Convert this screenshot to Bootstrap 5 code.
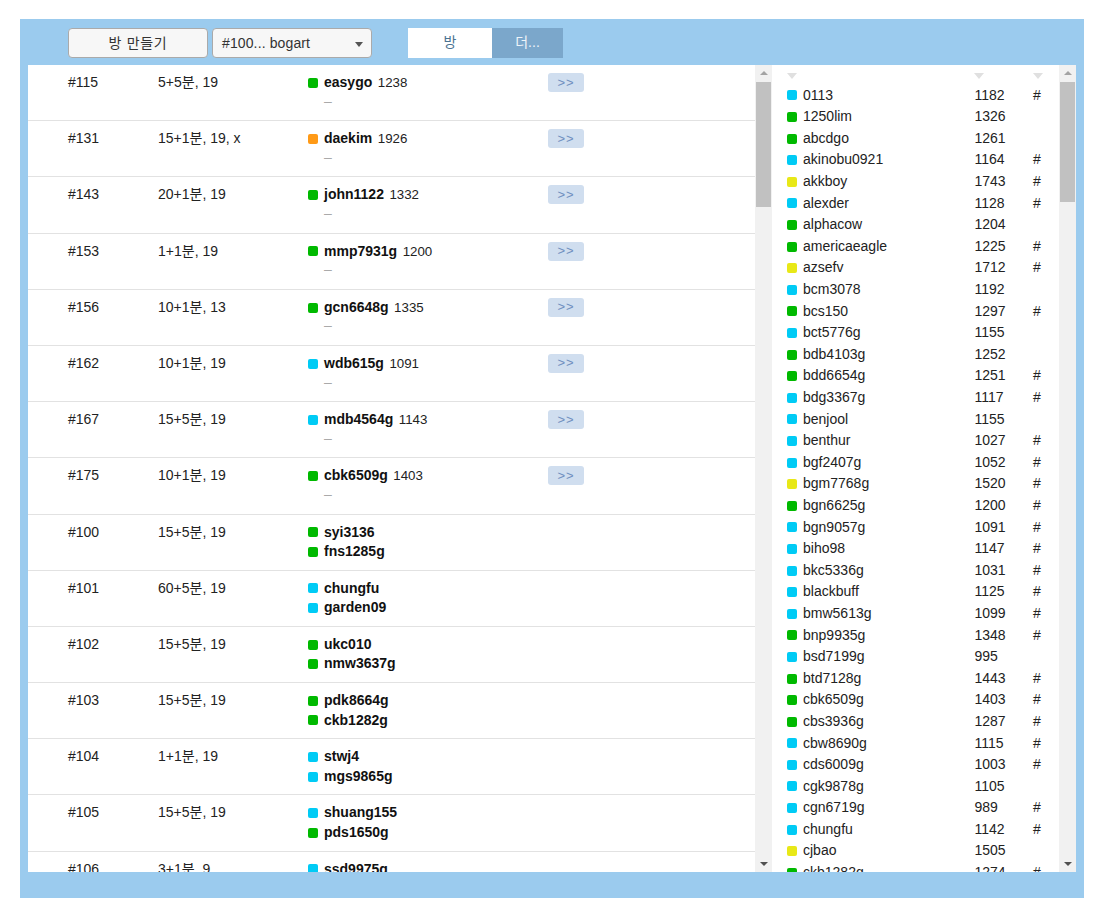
<!DOCTYPE html>
<html lang="ko"><head><meta charset="utf-8"><title>Rooms</title>
<link rel="stylesheet" href="https://cdn.jsdelivr.net/npm/bootstrap@5.3.0/dist/css/bootstrap.min.css">
<style>
html,body{height:898px;overflow:hidden;background:#fff}
body{font:14px/19.6px "Liberation Sans","Noto Sans CJK KR",sans-serif;color:#222}
.frame{margin:19px 26px 0 20px;height:879px;background:#9bcbee;padding:0 8px 26px}
.topbar{height:46px;padding:9px 0 0 40px}
.mk{width:140px;height:30px;padding:0;background:#f7f7f7;border:1px solid #aaa;border-radius:4px;font-size:14px;letter-spacing:.7px;color:#333}
.pick{width:160px;height:30px;margin-left:4px;padding:0 8px 0 9px;background:#f7f7f7;border:1px solid #aaa;border-radius:4px;font-size:14px;letter-spacing:.12px;color:#333}
.pick::after{border-top:5px solid #555;border-left:4px solid transparent;border-right:4px solid transparent;border-bottom:0;margin:2px 0 0}
.tabz{margin-left:36px;height:30px}
.tabz .nav-link{height:30px;padding:0;line-height:28px;font-size:14px;text-align:center;border-radius:0}
.tab-on{width:84px;background:#fff;color:#4a7391}
.tab-off{width:71px;background:#7ba7cb;color:#eef4f9}
.body-wrap{height:807px;background:#fff;overflow:hidden}
.left-pane{width:727px;height:807px;overflow:hidden}
.gm{height:56.2px;padding:8px 0 0 40px;border-bottom:1px solid #e2e2e2}
.c-id{width:90px}.c-tm{width:150px}.c-pl{width:240px}
.sq{display:inline-block;width:10px;height:10px;border-radius:2px;margin-right:6px;flex:none}
.g{background:#00b900}.b{background:#00cbf5}.y{background:#e8e817}.o{background:#ff9a17}
.pl{display:flex;align-items:center;height:19.6px}
.pl b{font-weight:700;color:#111}
.pl span.rt{margin-left:5.5px;font-size:13.3px}
.dash{padding-left:16px;color:#aaa;height:19.6px;line-height:16px;font-size:14px}
.go{width:36px;height:19px;margin-top:0;padding:0;background:#d0deef;border:0;border-radius:3px;font-size:13px;line-height:18px;color:#6f8fc0;letter-spacing:1px}
.sbar{width:17px;height:807px;background:#f1f1f1;position:relative;flex:none}
.thumb{background:#c1c1c1;margin:17px 0 0 1px;width:15px}
.t1{height:125px}.t2{height:120px}
.up,.dn{position:absolute;left:5px;width:0;height:0;border-left:4px solid transparent;border-right:4px solid transparent}
.up{top:6px;border-bottom:4px solid #a3a3a3}.dn{bottom:6px;border-top:4px solid #505050}
.right-pane{width:287px;height:807px;overflow:hidden;flex:none}
.heads{height:19.7px;padding:8px 0 0 15px;display:flex}
.tri{width:0;height:0;border-left:5px solid transparent;border-right:5px solid transparent;border-top:6px solid #e0e0e0}
.tri.a{margin-right:177px}.tri.c{margin-left:49px}
.ur{height:21.6px;line-height:21.6px;padding-left:15px;display:flex;align-items:center}
.u-n{width:171.5px}.u-r{width:58.5px}
</style></head><body>
<div class="frame">
<div class="topbar d-flex">
<button type="button" class="btn mk">방 만들기</button>
<button type="button" class="btn pick dropdown-toggle d-flex align-items-center justify-content-between">#100... bogart</button>
<nav class="nav tabz"><a class="nav-link tab-on" href="#">방</a><a class="nav-link tab-off" href="#">더...</a></nav>
</div>
<div class="body-wrap d-flex">
<div class="left-pane">
<div class="gm d-flex"><div class="c-id">#115</div><div class="c-tm">5+5분, 19</div><div class="c-pl"><div class="pl"><i class="sq g"></i><b>easygo</b><span class="rt">1238</span></div><div class="dash">–</div></div><button type="button" class="btn go">&gt;&gt;</button></div>
<div class="gm d-flex"><div class="c-id">#131</div><div class="c-tm">15+1분, 19, x</div><div class="c-pl"><div class="pl"><i class="sq o"></i><b>daekim</b><span class="rt">1926</span></div><div class="dash">–</div></div><button type="button" class="btn go">&gt;&gt;</button></div>
<div class="gm d-flex"><div class="c-id">#143</div><div class="c-tm">20+1분, 19</div><div class="c-pl"><div class="pl"><i class="sq g"></i><b>john1122</b><span class="rt">1332</span></div><div class="dash">–</div></div><button type="button" class="btn go">&gt;&gt;</button></div>
<div class="gm d-flex"><div class="c-id">#153</div><div class="c-tm">1+1분, 19</div><div class="c-pl"><div class="pl"><i class="sq g"></i><b>mmp7931g</b><span class="rt">1200</span></div><div class="dash">–</div></div><button type="button" class="btn go">&gt;&gt;</button></div>
<div class="gm d-flex"><div class="c-id">#156</div><div class="c-tm">10+1분, 13</div><div class="c-pl"><div class="pl"><i class="sq g"></i><b>gcn6648g</b><span class="rt">1335</span></div><div class="dash">–</div></div><button type="button" class="btn go">&gt;&gt;</button></div>
<div class="gm d-flex"><div class="c-id">#162</div><div class="c-tm">10+1분, 19</div><div class="c-pl"><div class="pl"><i class="sq b"></i><b>wdb615g</b><span class="rt">1091</span></div><div class="dash">–</div></div><button type="button" class="btn go">&gt;&gt;</button></div>
<div class="gm d-flex"><div class="c-id">#167</div><div class="c-tm">15+5분, 19</div><div class="c-pl"><div class="pl"><i class="sq b"></i><b>mdb4564g</b><span class="rt">1143</span></div><div class="dash">–</div></div><button type="button" class="btn go">&gt;&gt;</button></div>
<div class="gm d-flex"><div class="c-id">#175</div><div class="c-tm">10+1분, 19</div><div class="c-pl"><div class="pl"><i class="sq g"></i><b>cbk6509g</b><span class="rt">1403</span></div><div class="dash">–</div></div><button type="button" class="btn go">&gt;&gt;</button></div>
<div class="gm d-flex"><div class="c-id">#100</div><div class="c-tm">15+5분, 19</div><div class="c-pl"><div class="pl"><i class="sq g"></i><b>syi3136</b></div><div class="pl"><i class="sq g"></i><b>fns1285g</b></div></div></div>
<div class="gm d-flex"><div class="c-id">#101</div><div class="c-tm">60+5분, 19</div><div class="c-pl"><div class="pl"><i class="sq b"></i><b>chungfu</b></div><div class="pl"><i class="sq b"></i><b>garden09</b></div></div></div>
<div class="gm d-flex"><div class="c-id">#102</div><div class="c-tm">15+5분, 19</div><div class="c-pl"><div class="pl"><i class="sq g"></i><b>ukc010</b></div><div class="pl"><i class="sq g"></i><b>nmw3637g</b></div></div></div>
<div class="gm d-flex"><div class="c-id">#103</div><div class="c-tm">15+5분, 19</div><div class="c-pl"><div class="pl"><i class="sq g"></i><b>pdk8664g</b></div><div class="pl"><i class="sq g"></i><b>ckb1282g</b></div></div></div>
<div class="gm d-flex"><div class="c-id">#104</div><div class="c-tm">1+1분, 19</div><div class="c-pl"><div class="pl"><i class="sq b"></i><b>stwj4</b></div><div class="pl"><i class="sq b"></i><b>mgs9865g</b></div></div></div>
<div class="gm d-flex"><div class="c-id">#105</div><div class="c-tm">15+5분, 19</div><div class="c-pl"><div class="pl"><i class="sq b"></i><b>shuang155</b></div><div class="pl"><i class="sq g"></i><b>pds1650g</b></div></div></div>
<div class="gm d-flex"><div class="c-id">#106</div><div class="c-tm">3+1분, 9</div><div class="c-pl"><div class="pl"><i class="sq b"></i><b>ssd9975g</b></div></div></div>
</div>
<div class="sbar"><i class="up"></i><div class="thumb t1"></div><i class="dn"></i></div>
<div class="right-pane">
<div class="heads"><i class="tri a"></i><i class="tri"></i><i class="tri c"></i></div>
<div class="ur"><i class="sq b"></i><div class="u-n">0113</div><div class="u-r">1182</div><div>#</div></div>
<div class="ur"><i class="sq g"></i><div class="u-n">1250lim</div><div class="u-r">1326</div></div>
<div class="ur"><i class="sq g"></i><div class="u-n">abcdgo</div><div class="u-r">1261</div></div>
<div class="ur"><i class="sq b"></i><div class="u-n">akinobu0921</div><div class="u-r">1164</div><div>#</div></div>
<div class="ur"><i class="sq y"></i><div class="u-n">akkboy</div><div class="u-r">1743</div><div>#</div></div>
<div class="ur"><i class="sq b"></i><div class="u-n">alexder</div><div class="u-r">1128</div><div>#</div></div>
<div class="ur"><i class="sq g"></i><div class="u-n">alphacow</div><div class="u-r">1204</div></div>
<div class="ur"><i class="sq g"></i><div class="u-n">americaeagle</div><div class="u-r">1225</div><div>#</div></div>
<div class="ur"><i class="sq y"></i><div class="u-n">azsefv</div><div class="u-r">1712</div><div>#</div></div>
<div class="ur"><i class="sq b"></i><div class="u-n">bcm3078</div><div class="u-r">1192</div></div>
<div class="ur"><i class="sq g"></i><div class="u-n">bcs150</div><div class="u-r">1297</div><div>#</div></div>
<div class="ur"><i class="sq b"></i><div class="u-n">bct5776g</div><div class="u-r">1155</div></div>
<div class="ur"><i class="sq g"></i><div class="u-n">bdb4103g</div><div class="u-r">1252</div></div>
<div class="ur"><i class="sq g"></i><div class="u-n">bdd6654g</div><div class="u-r">1251</div><div>#</div></div>
<div class="ur"><i class="sq b"></i><div class="u-n">bdg3367g</div><div class="u-r">1117</div><div>#</div></div>
<div class="ur"><i class="sq b"></i><div class="u-n">benjool</div><div class="u-r">1155</div></div>
<div class="ur"><i class="sq b"></i><div class="u-n">benthur</div><div class="u-r">1027</div><div>#</div></div>
<div class="ur"><i class="sq b"></i><div class="u-n">bgf2407g</div><div class="u-r">1052</div><div>#</div></div>
<div class="ur"><i class="sq y"></i><div class="u-n">bgm7768g</div><div class="u-r">1520</div><div>#</div></div>
<div class="ur"><i class="sq g"></i><div class="u-n">bgn6625g</div><div class="u-r">1200</div><div>#</div></div>
<div class="ur"><i class="sq b"></i><div class="u-n">bgn9057g</div><div class="u-r">1091</div><div>#</div></div>
<div class="ur"><i class="sq b"></i><div class="u-n">biho98</div><div class="u-r">1147</div><div>#</div></div>
<div class="ur"><i class="sq b"></i><div class="u-n">bkc5336g</div><div class="u-r">1031</div><div>#</div></div>
<div class="ur"><i class="sq b"></i><div class="u-n">blackbuff</div><div class="u-r">1125</div><div>#</div></div>
<div class="ur"><i class="sq b"></i><div class="u-n">bmw5613g</div><div class="u-r">1099</div><div>#</div></div>
<div class="ur"><i class="sq g"></i><div class="u-n">bnp9935g</div><div class="u-r">1348</div><div>#</div></div>
<div class="ur"><i class="sq b"></i><div class="u-n">bsd7199g</div><div class="u-r">995</div></div>
<div class="ur"><i class="sq g"></i><div class="u-n">btd7128g</div><div class="u-r">1443</div><div>#</div></div>
<div class="ur"><i class="sq g"></i><div class="u-n">cbk6509g</div><div class="u-r">1403</div><div>#</div></div>
<div class="ur"><i class="sq g"></i><div class="u-n">cbs3936g</div><div class="u-r">1287</div><div>#</div></div>
<div class="ur"><i class="sq b"></i><div class="u-n">cbw8690g</div><div class="u-r">1115</div><div>#</div></div>
<div class="ur"><i class="sq b"></i><div class="u-n">cds6009g</div><div class="u-r">1003</div><div>#</div></div>
<div class="ur"><i class="sq b"></i><div class="u-n">cgk9878g</div><div class="u-r">1105</div></div>
<div class="ur"><i class="sq b"></i><div class="u-n">cgn6719g</div><div class="u-r">989</div><div>#</div></div>
<div class="ur"><i class="sq b"></i><div class="u-n">chungfu</div><div class="u-r">1142</div><div>#</div></div>
<div class="ur"><i class="sq y"></i><div class="u-n">cjbao</div><div class="u-r">1505</div></div>
<div class="ur"><i class="sq g"></i><div class="u-n">ckb1282g</div><div class="u-r">1274</div><div>#</div></div>
</div>
<div class="sbar"><i class="up"></i><div class="thumb t2"></div><i class="dn"></i></div>
</div>
</div>
</body></html>
